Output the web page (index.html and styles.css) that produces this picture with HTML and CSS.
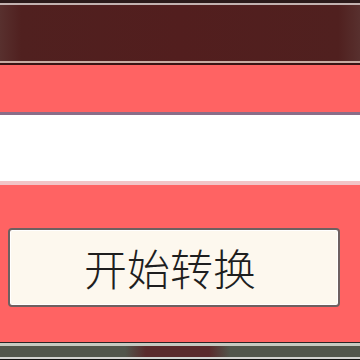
FILE: index.html
```html
<!DOCTYPE html>
<html lang="zh-CN">
<head>
<meta charset="utf-8">
<link rel="stylesheet" href="styles.css">
</head>
<body>
<div class="window">
  <div class="titlebar">
    <div class="tb-top"></div>
    <div class="tb-hi"></div>
    <div class="tb-body"></div>
    <div class="tb-line"></div>
    <div class="tb-dark"></div>
  </div>
  <div class="band"></div>
  <div class="field"></div>
  <div class="panel">
    <button class="btn">开始转换</button>
  </div>
  <div class="footer">
    <div class="ft-dark"></div>
    <div class="ft-hi"></div>
    <div class="ft-body"><div class="ft-seg"></div></div>
    <div class="ft-hi2"></div>
    <div class="ft-black"></div>
  </div>
</div>
</body>
</html>
```
FILE: styles.css
```css
html, body {
  margin: 0;
  padding: 0;
  width: 360px;
  height: 360px;
  overflow: hidden;
  background: #ff6363;
}
.window {
  display: flex;
  flex-direction: column;
  width: 360px;
  height: 360px;
}
.tb-top { height: 3px; background: #2b1a1a; }
.tb-hi { height: 2px; background: #c2b2b0; }
.tb-body {
  height: 56px;
  background: linear-gradient(90deg, #58302e 0%, #50201f 6%, #521e1e 50%, #50201f 94%, #58302e 100%);
}
.tb-line { height: 2px; background: #c9aaa2; }
.tb-dark { height: 2px; background: #3a1414; }
.band { height: 47px; background: #ff6363; }
.field {
  height: 66px;
  background: #ffffff;
  border-top: 3px solid #8a6e88;
  border-bottom: 4px solid #f2c4c6;
}
.panel {
  height: 157px;
  background: #ff6363;
  display: flex;
  flex-direction: column;
  align-items: flex-start;
  padding: 43px 0 0 8px;
  box-sizing: border-box;
}
.btn {
  width: 332px;
  height: 79px;
  margin: 0;
  padding: 0 8px 2px 0;
  background: #fdf8ee;
  border: 2px solid #6e6060;
  border-radius: 4px;
  box-shadow: inset 0 0 0 1px #ffffff;
  font-family: "Noto Sans CJK SC", "Noto Sans", sans-serif;
  font-size: 43px;
  font-weight: 300;
  color: #1e1e1e;
  text-align: center;
}
.ft-dark { height: 1px; background: #2a2424; }
.ft-hi { height: 3px; background: #c6cac2; }
.ft-body {
  height: 11px;
  background: #52564c;
  display: flex;
  justify-content: flex-start;
  padding-left: 125px;
}
.ft-seg {
  width: 105px;
  height: 11px;
  background: linear-gradient(90deg, #52564c 0%, #5a2a2c 20%, #5a2a2c 80%, #52564c 100%);
}
.ft-hi2 { height: 2px; background: #d2d2d0; }
.ft-black { height: 1px; background: #111111; }
```
